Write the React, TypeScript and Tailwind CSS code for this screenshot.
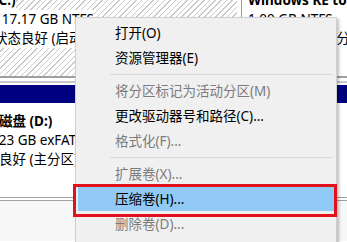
import React from "react"

const hatch =
  "bg-[repeating-linear-gradient(135deg,#c9c9c9_0px,#c9c9c9_1px,#ffffff_1px,#ffffff_4px)]"

type Item = { label: string; disabled?: boolean; active?: boolean } | "sep"

const items: Item[] = [
  { label: "打开(O)" },
  { label: "资源管理器(E)" },
  "sep",
  { label: "将分区标记为活动分区(M)", disabled: true },
  { label: "更改驱动器号和路径(C)..." },
  { label: "格式化(F)...", disabled: true },
  "sep",
  { label: "扩展卷(X)...", disabled: true },
  { label: "压缩卷(H)...", active: true },
  { label: "删除卷(D)...", disabled: true },
]

function ContextMenu() {
  return (
    <div className="absolute left-[75px] top-[17px] w-[262px] h-[240px] bg-[#f0f0f0] border border-[#cfcfcf] shadow-[2px_2px_3px_rgba(0,0,0,0.25)] pt-[2px]">
      {items.map((it, i) =>
        it === "sep" ? (
          <div key={i} className="h-[8px] flex items-center pl-[34px] pr-[3px]">
            <div className="h-px w-full bg-[#d9d9d9]" />
          </div>
        ) : (
          <div
            key={i}
            className={`h-[25px] mx-[2px] flex items-center pl-[37px] text-[13.5px] leading-[22px] ${
              it.active ? "bg-[#91c9f7]" : ""
            } ${it.disabled ? "text-[#7c7c7c]" : "text-black"}`}
          >
            {it.label}
          </div>
        )
      )}
    </div>
  )
}

export default function App() {
  return (
    <div
      className="relative w-[347px] h-[242px] overflow-hidden bg-white text-[13.5px] leading-[19px] text-black"
      style={{ fontFamily: '"Noto Sans", "Noto Sans CJK SC", sans-serif' }}
    >
      {/* disk 0 row */}
      <div className="flex h-[76px]">
        <div className={`w-[237px] ${hatch} overflow-hidden`}>
          <div className="mt-[-9px] ml-[-6px] flex flex-col items-start whitespace-nowrap">
            <span className="bg-white font-bold">(C:)</span>
            <span className="bg-white">117.17 GB NTFS</span>
            <span className="bg-white">状态良好 (启动, 故障转储, 基本数据分区)</span>
          </div>
        </div>
        <div className="w-[4px] bg-white" />
        <div className="flex-1 overflow-hidden border-l border-[#9a9a9a] pl-[6px]">
          <div className="mt-[-9px] flex flex-col items-start whitespace-nowrap">
            <span className="font-bold">Windows RE tools</span>
            <span>1.00 GB NTFS</span>
            <span>状态良好 (恢复分区, OEM 分区)</span>
          </div>
        </div>
      </div>
      <div className="h-[2px] bg-[#a0a0a0]" />
      <div className="h-[3px] bg-white" />
      <div className="h-[2px] bg-[#c8c8c8]" />
      <div className="h-[2px] bg-white" />

      {/* disk 1 row */}
      <div className="h-[18px] bg-[#000080]" />
      <div className="h-[94px] overflow-hidden pt-[9px]">
        <div className="ml-[-28px] flex flex-col items-start whitespace-nowrap">
          <span className="font-bold">本地磁盘 (D:)</span>
          <span>114.23 GB exFAT</span>
          <span>状态良好 (主分区)</span>
        </div>
      </div>
      <div className="h-px bg-[#a0a0a0]" />
      <div className="h-[2px] bg-white" />
      <div className="h-px bg-[#a0a0a0]" />
      <div className="h-[40px] bg-[#f7f7f7]" />

      <ContextMenu />
      <div className="absolute left-[73px] top-[184px] w-[264px] h-[33px] border-[3px] border-[#e3101e]" />
    </div>
  )
}
